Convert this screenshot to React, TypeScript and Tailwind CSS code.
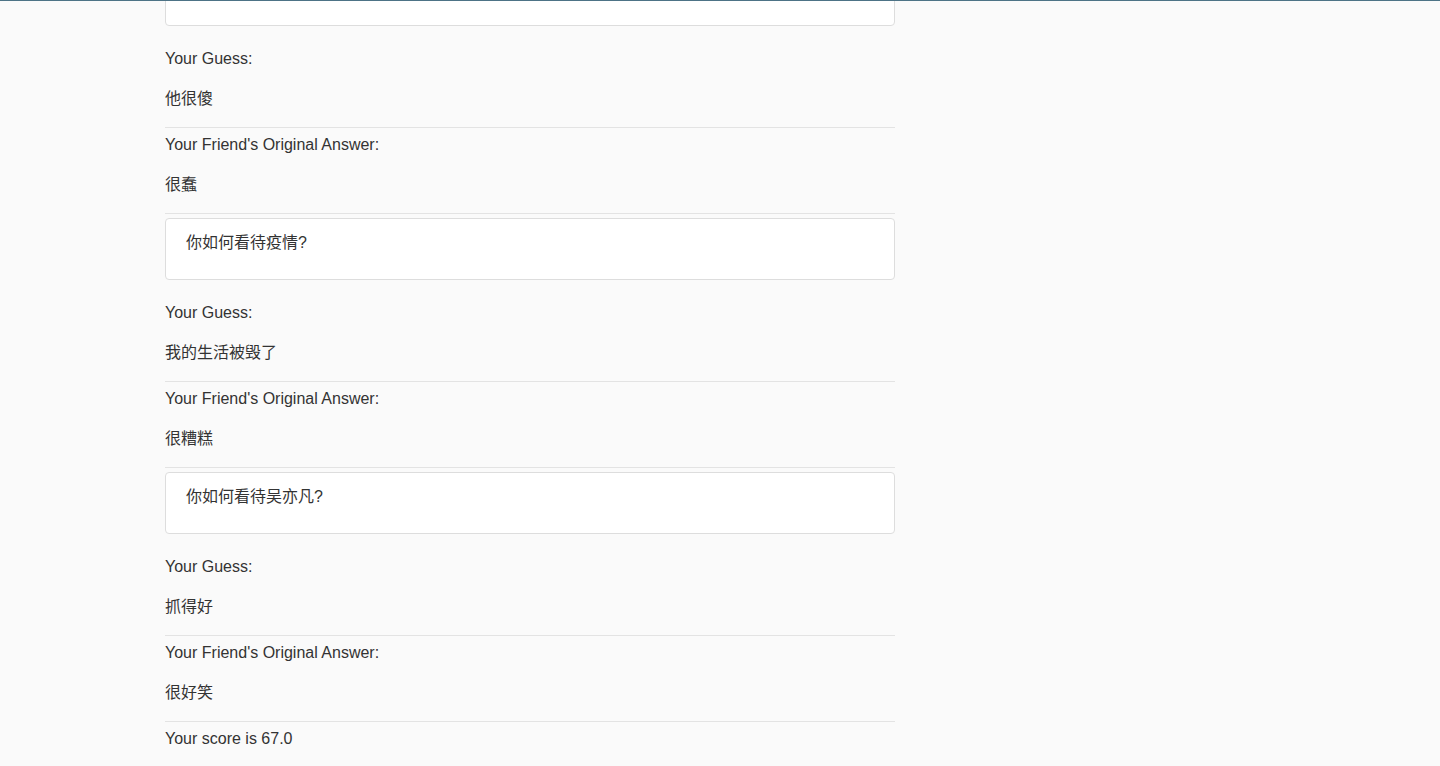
const rounds = [
  { question: '', guess: '他很傻', answer: '很蠢' },
  { question: '你如何看待疫情?', guess: '我的生活被毁了', answer: '很糟糕' },
  { question: '你如何看待吴亦凡?', guess: '抓得好', answer: '很好笑' },
]

function QuestionCard({ text, first }: { text: string; first?: boolean }) {
  return (
    <div
      className={`bg-white border border-[#dddddd] rounded-[4px] pl-[20px] pr-[20px] pt-[12px] pb-[24px] leading-6 ${first ? '-mt-[37px]' : ''}`}
    >
      <span className="block h-6">{text}</span>
    </div>
  )
}

export default function App() {
  return (
    <div
      className="min-h-[766px] bg-[#fafafa] border-t border-[#4d7386] overflow-hidden text-[16px] leading-6 text-[#333333]"
      style={{ fontFamily: '"Liberation Sans", Helvetica, Arial, "Noto Sans CJK SC", sans-serif' }}
    >
      <div className="ml-[165px] w-[730px]">
        {rounds.map((r, i) => (
          <div key={i}>
            <QuestionCard text={r.question} first={i === 0} />
            <p className="mt-[21px] mb-[16px]">Your Guess:</p>
            <p className="mb-[16px]">{r.guess}</p>
            <hr className="border-0 border-t border-[#e3e3e3] mb-[5px]" />
            <p className="mb-[16px]">Your Friend's Original Answer:</p>
            <p className="mb-[16px]">{r.answer}</p>
            <hr className="border-0 border-t border-[#e3e3e3] mb-[4px]" />
          </div>
        ))}
        <p className="mt-[5px]">Your score is 67.0</p>
      </div>
    </div>
  )
}
